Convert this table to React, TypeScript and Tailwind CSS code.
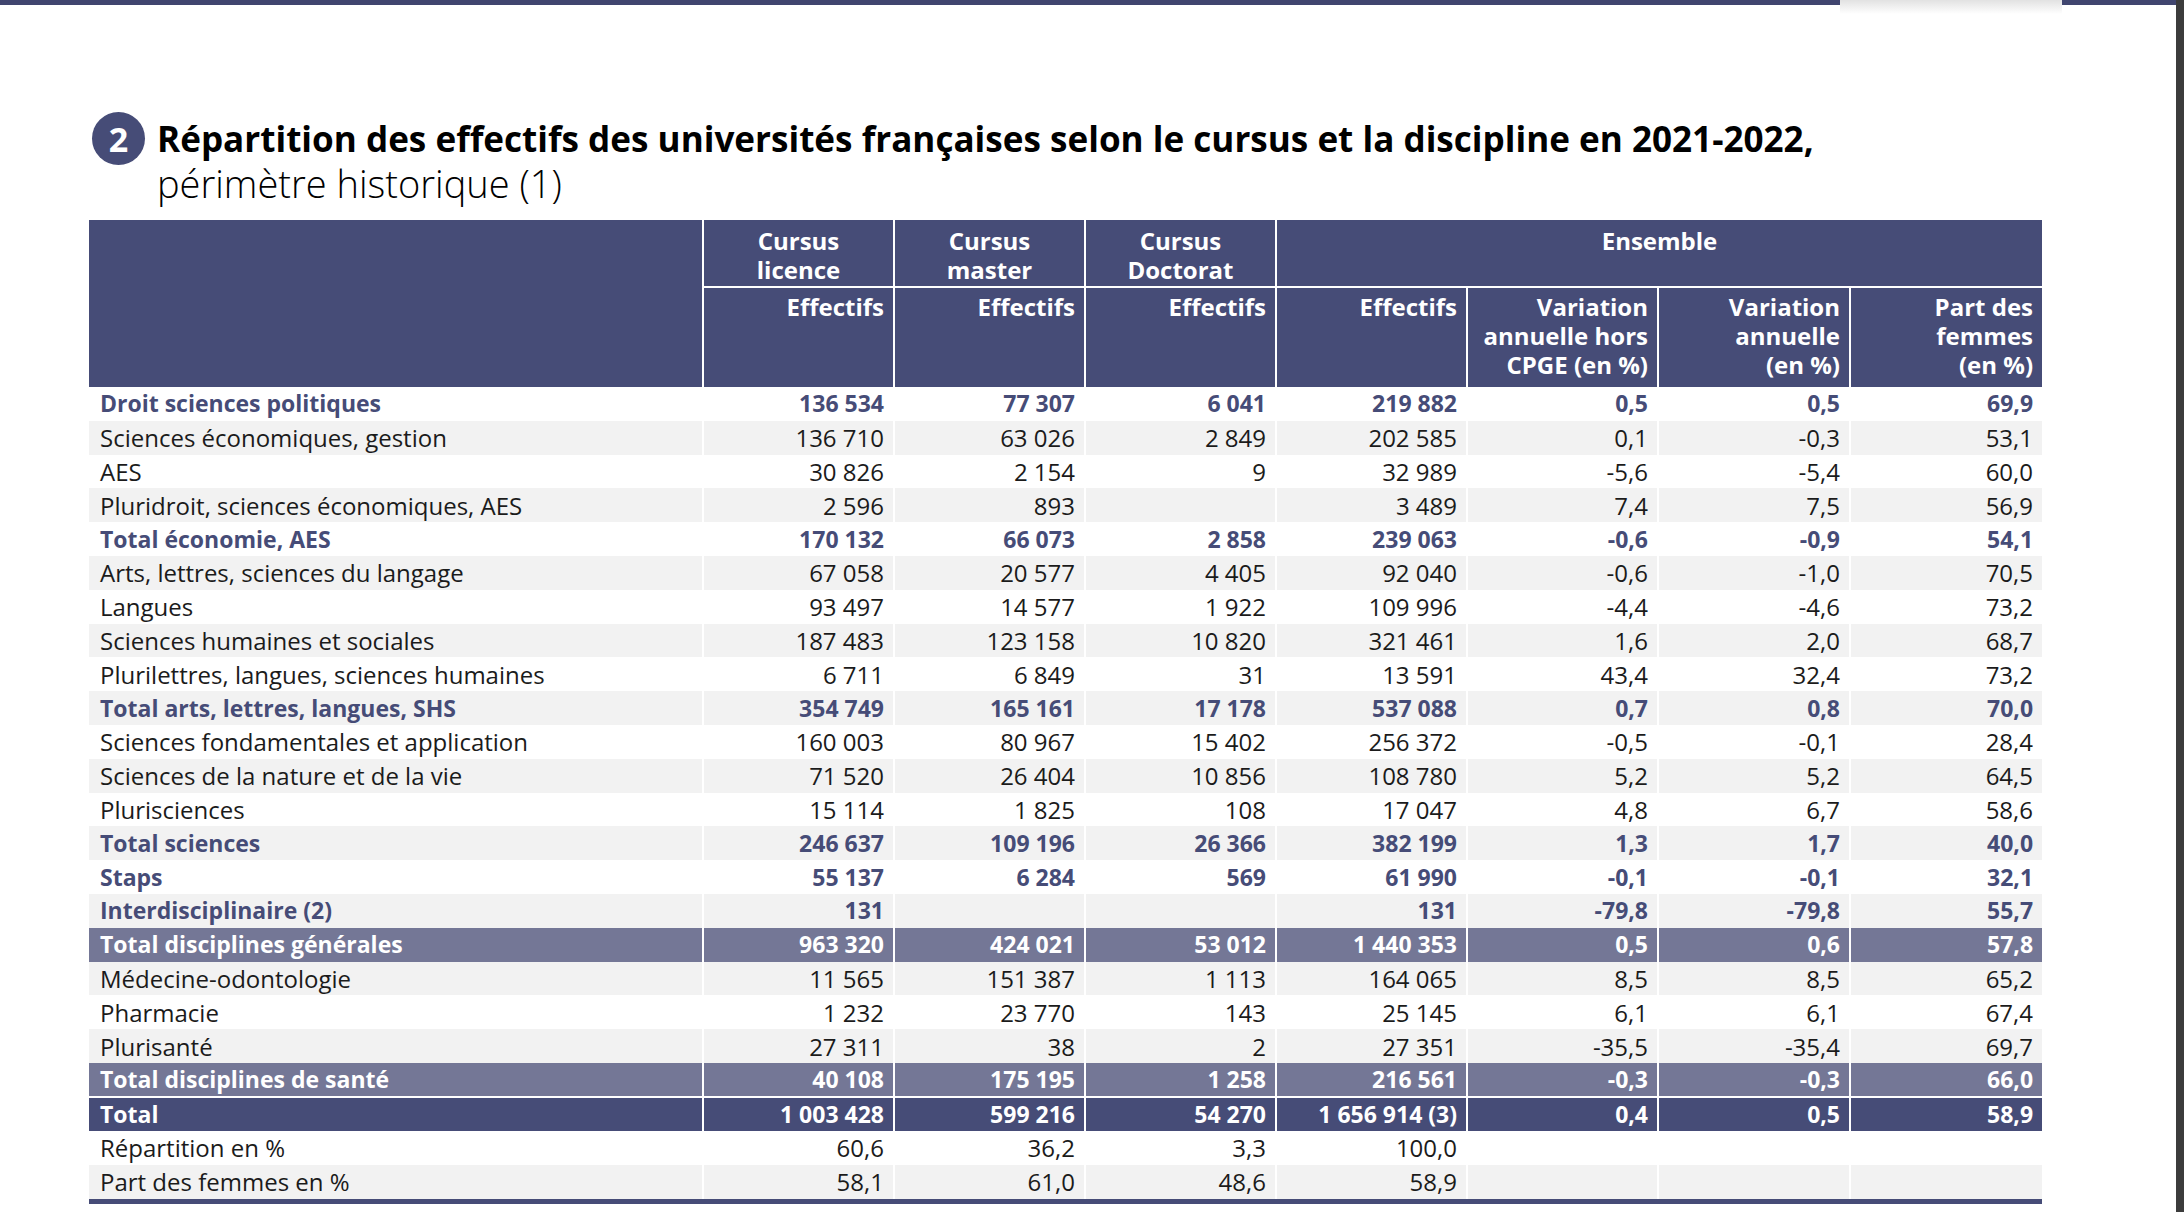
import React from 'react';

type Kind = 'plain' | 'strong' | 'sub' | 'total';

interface Row {
  label: string;
  values: string[];
  kind: Kind;
}

const rows: Row[] = [
  { label: 'Droit sciences politiques', values: ['136 534', '77 307', '6 041', '219 882', '0,5', '0,5', '69,9'], kind: 'strong' },
  { label: 'Sciences économiques, gestion', values: ['136 710', '63 026', '2 849', '202 585', '0,1', '-0,3', '53,1'], kind: 'plain' },
  { label: 'AES', values: ['30 826', '2 154', '9', '32 989', '-5,6', '-5,4', '60,0'], kind: 'plain' },
  { label: 'Pluridroit, sciences économiques, AES', values: ['2 596', '893', '', '3 489', '7,4', '7,5', '56,9'], kind: 'plain' },
  { label: 'Total économie, AES', values: ['170 132', '66 073', '2 858', '239 063', '-0,6', '-0,9', '54,1'], kind: 'strong' },
  { label: 'Arts, lettres, sciences du langage', values: ['67 058', '20 577', '4 405', '92 040', '-0,6', '-1,0', '70,5'], kind: 'plain' },
  { label: 'Langues', values: ['93 497', '14 577', '1 922', '109 996', '-4,4', '-4,6', '73,2'], kind: 'plain' },
  { label: 'Sciences humaines et sociales', values: ['187 483', '123 158', '10 820', '321 461', '1,6', '2,0', '68,7'], kind: 'plain' },
  { label: 'Plurilettres, langues, sciences humaines', values: ['6 711', '6 849', '31', '13 591', '43,4', '32,4', '73,2'], kind: 'plain' },
  { label: 'Total arts, lettres, langues, SHS', values: ['354 749', '165 161', '17 178', '537 088', '0,7', '0,8', '70,0'], kind: 'strong' },
  { label: 'Sciences fondamentales et application', values: ['160 003', '80 967', '15 402', '256 372', '-0,5', '-0,1', '28,4'], kind: 'plain' },
  { label: 'Sciences de la nature et de la vie', values: ['71 520', '26 404', '10 856', '108 780', '5,2', '5,2', '64,5'], kind: 'plain' },
  { label: 'Plurisciences', values: ['15 114', '1 825', '108', '17 047', '4,8', '6,7', '58,6'], kind: 'plain' },
  { label: 'Total sciences', values: ['246 637', '109 196', '26 366', '382 199', '1,3', '1,7', '40,0'], kind: 'strong' },
  { label: 'Staps', values: ['55 137', '6 284', '569', '61 990', '-0,1', '-0,1', '32,1'], kind: 'strong' },
  { label: 'Interdisciplinaire (2)', values: ['131', '', '', '131', '-79,8', '-79,8', '55,7'], kind: 'strong' },
  { label: 'Total disciplines générales', values: ['963 320', '424 021', '53 012', '1 440 353', '0,5', '0,6', '57,8'], kind: 'sub' },
  { label: 'Médecine-odontologie', values: ['11 565', '151 387', '1 113', '164 065', '8,5', '8,5', '65,2'], kind: 'plain' },
  { label: 'Pharmacie', values: ['1 232', '23 770', '143', '25 145', '6,1', '6,1', '67,4'], kind: 'plain' },
  { label: 'Plurisanté', values: ['27 311', '38', '2', '27 351', '-35,5', '-35,4', '69,7'], kind: 'plain' },
  { label: 'Total disciplines de santé', values: ['40 108', '175 195', '1 258', '216 561', '-0,3', '-0,3', '66,0'], kind: 'sub' },
  { label: 'Total', values: ['1 003 428', '599 216', '54 270', '1 656 914 (3)', '0,4', '0,5', '58,9'], kind: 'total' },
  { label: 'Répartition en %', values: ['60,6', '36,2', '3,3', '100,0', '', '', ''], kind: 'plain' },
  { label: 'Part des femmes en %', values: ['58,1', '61,0', '48,6', '58,9', '', '', ''], kind: 'plain' },
];

function rowClass(kind: Kind, index: number) {
  if (kind === 'sub') return 'bg-[#747796] text-white font-bold';
  if (kind === 'total') return 'bg-[#464c77] text-white font-bold';
  const stripe = index % 2 === 1 ? 'bg-[#f2f2f2]' : 'bg-white';
  if (kind === 'strong') return `${stripe} text-[#464c77] font-bold`;
  return `${stripe} text-[#1b1b1b]`;
}

function Header() {
  return (
    <thead>
      <tr className="h-[67px] bg-[#464c77] text-[24px] font-bold leading-[29px] text-white">
        <th rowSpan={2} className="border-r-2 border-white" />
        <th className="border-x-2 border-b-2 border-white px-2 pt-[6px] align-top text-center font-bold">
          Cursus
          <br />
          licence
        </th>
        <th className="border-x-2 border-b-2 border-white px-2 pt-[6px] align-top text-center font-bold">
          Cursus
          <br />
          master
        </th>
        <th className="border-x-2 border-b-2 border-white px-2 pt-[6px] align-top text-center font-bold">
          Cursus
          <br />
          Doctorat
        </th>
        <th colSpan={4} className="border-l-2 border-b-2 border-white px-2 pt-[6px] align-top text-center font-bold">
          Ensemble
        </th>
      </tr>
      <tr className="h-[100px] bg-[#464c77] text-[24px] font-bold leading-[29px] text-white">
        <th className="border-x-2 border-white pr-[9px] pt-[4px] align-top text-right font-bold">Effectifs</th>
        <th className="border-x-2 border-white pr-[9px] pt-[4px] align-top text-right font-bold">Effectifs</th>
        <th className="border-x-2 border-white pr-[9px] pt-[4px] align-top text-right font-bold">Effectifs</th>
        <th className="border-x-2 border-white pr-[9px] pt-[4px] align-top text-right font-bold">Effectifs</th>
        <th className="border-x-2 border-white pr-[9px] pt-[4px] align-top text-right font-bold">
          Variation
          <br />
          annuelle hors
          <br />
          CPGE (en %)
        </th>
        <th className="border-x-2 border-white pr-[9px] pt-[4px] align-top text-right font-bold">
          Variation
          <br />
          annuelle
          <br />
          (en %)
        </th>
        <th className="border-l-2 border-white pr-[9px] pt-[4px] align-top text-right font-bold">
          Part des
          <br />
          femmes
          <br />
          (en %)
        </th>
      </tr>
    </thead>
  );
}

export default function App() {
  return (
    <div className="flex h-[1212px] w-[2184px] overflow-hidden bg-white font-['Open_Sans',sans-serif]">
      <div className="flex min-w-0 flex-1 flex-col">
        {/* top navigation strip */}
        <div className="flex h-[14px] items-start">
          <div className="h-[5px] w-[1840px] bg-[#40456f]" />
          <div className="h-[14px] w-[222px] bg-gradient-to-b from-[#e2e2e2] to-white" />
          <div className="h-[5px] flex-1 bg-[#40456f]" />
        </div>

        <div className="mt-[98px] flex items-start gap-[12px] pl-[92px]">
          <div className="flex h-[53px] w-[53px] shrink-0 items-center justify-center rounded-full bg-[#464c77] text-[34px] font-bold leading-none text-white">
            2
          </div>
          <div className="pt-[4px] leading-[45px] text-black">
            <div className="text-[35.1px] font-bold">
              Répartition des effectifs des universités françaises selon le cursus et la discipline en 2021-2022,
            </div>
            <div className="text-[38px] font-light">périmètre historique (1)</div>
          </div>
        </div>

        <div className="ml-[89px] mt-[14px] w-[1953px]">
          <table className="w-full table-fixed border-collapse">
            <colgroup>
              <col className="w-[614px]" />
              <col className="w-[191px]" />
              <col className="w-[191px]" />
              <col className="w-[191px]" />
              <col className="w-[191px]" />
              <col className="w-[191px]" />
              <col className="w-[192px]" />
              <col className="w-[192px]" />
            </colgroup>
            <Header />
            <tbody>
              {rows.map((row, i) => {
                const bold = row.kind !== 'plain';
                const divider = row.kind === 'sub' && row.label.includes('santé') ? 'border-b-2 border-white' : '';
                return (
                  <tr key={row.label} className={`h-[33.8px] ${rowClass(row.kind, i)} ${divider}`}>
                    <td className={`whitespace-nowrap border-r-2 border-white pl-[11px] leading-[33px] ${bold ? 'text-[23px]' : 'text-[24px]'}`}>
                      {row.label}
                    </td>
                    {row.values.map((v, j) => (
                      <td
                        key={j}
                        className={`whitespace-nowrap border-white pr-[9px] text-right leading-[33px] ${
                          bold ? 'text-[23px]' : 'text-[24px]'
                        } ${j < 6 ? 'border-x-2' : 'border-l-2'}`}
                      >
                        {v}
                      </td>
                    ))}
                  </tr>
                );
              })}
            </tbody>
          </table>
          <div className="h-[5px] w-full bg-[#464c77]" />
        </div>
      </div>
      <div className="w-[8px] shrink-0 bg-[#3c3c3c]" />
    </div>
  );
}
